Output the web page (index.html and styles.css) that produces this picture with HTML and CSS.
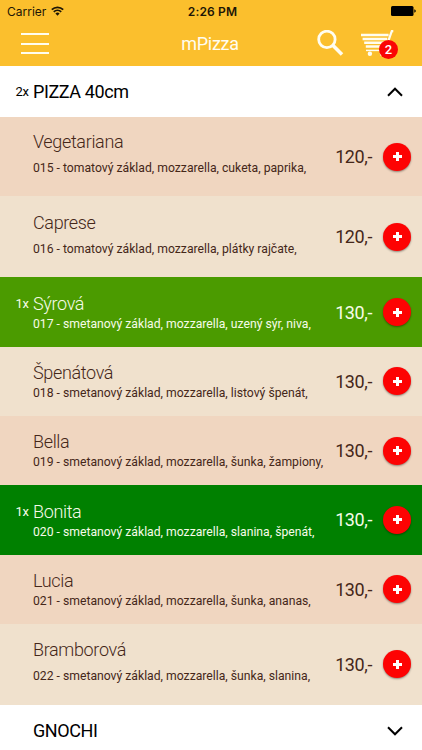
FILE: index.html
```html
<!DOCTYPE html>
<html lang="cs">

<head>
    <meta charset="utf-8">
    <meta name="viewport" content="width=device-width, initial-scale=1">
    <title>mPizza</title>
    <link rel="stylesheet" href="styles.css">
</head>

<body>
    <header class="header">
        <div class="statusbar">
            <div class="carrier">
                <span>Carrier</span>
                <svg class="wifi" width="13" height="10" viewBox="0 0 13 10" fill="none" stroke="#1d1606" stroke-width="1.8">
                    <path d="M.8 3.6a8.2 8.2 0 0 1 11.4 0M2.8 5.9a5.3 5.3 0 0 1 7.4 0" />
                    <path d="M6.5 9.7 4.4 7.6a3 3 0 0 1 4.2 0z" fill="#1d1606" stroke="none" />
                </svg>
            </div>
            <span class="time">2:26 PM</span>
            <svg class="battery" width="25" height="10" viewBox="0 0 25 10">
                <rect width="22.5" height="10" rx="1.5" />
                <path d="M23.3 3.3q1.5.4 1.5 1.7t-1.5 1.7z" />
            </svg>
        </div>
        <div class="navbar">
            <button class="menu"><span></span><span></span><span></span></button>
            <h1 class="brand">mPizza</h1>
            <div class="tools">
                <svg class="search" width="28" height="28" viewBox="0 0 28 28" fill="none" stroke="#fffdf0">
                    <circle cx="9.9" cy="9.4" r="8.2" stroke-width="2.8" />
                    <path d="m15.8 15.3 9.2 9.2" stroke-width="3.6" />
                </svg>
                <div class="cart">
                    <svg width="34" height="27" viewBox="0 0 34 27" fill="none" stroke="#fffdf0">
                        <path d="M0 5h27.6M1.6 8.9h24.6M3.2 12.7h22M4.8 16.5h19" stroke-width="2.5" />
                        <path d="M5 20.4h18.5" stroke-width="1.5" />
                        <path d="M32.3 1.2h-1.5L24 20.4" stroke-width="2.2" />
                        <circle cx="8.9" cy="23.8" r="2.2" fill="#fffdf0" stroke="none" />
                        <circle cx="21" cy="23.8" r="2.2" fill="#fffdf0" stroke="none" />
                    </svg>
                    <span class="badge">2</span>
                </div>
            </div>
        </div>
    </header>

    <main>
        <div class="category">
            <span class="count">2x</span>
            <h2>PIZZA 40cm</h2>
            <svg class="arrow" width="16" height="10" viewBox="0 0 16 10"><path d="m1 8.7 7-7 7 7" /></svg>
        </div>

        <ul class="list">
            <li class="item tall first">
                <span class="count"></span>
                <div class="info"><h3>Vegetariana</h3><p>015 - tomatový základ, mozzarella, cuketa, paprika,</p></div>
                <span class="price">120,-</span>
                <button class="add"></button>
            </li>
            <li class="item tall">
                <span class="count"></span>
                <div class="info"><h3>Caprese</h3><p>016 - tomatový základ, mozzarella, plátky rajčate,</p></div>
                <span class="price">120,-</span>
                <button class="add"></button>
            </li>
            <li class="item selected">
                <span class="count">1x</span>
                <div class="info"><h3>Sýrová</h3><p>017 - smetanový základ, mozzarella, uzený sýr, niva,</p></div>
                <span class="price">130,-</span>
                <button class="add"></button>
            </li>
            <li class="item">
                <span class="count"></span>
                <div class="info"><h3>Špenátová</h3><p>018 - smetanový základ, mozzarella, listový špenát,</p></div>
                <span class="price">130,-</span>
                <button class="add"></button>
            </li>
            <li class="item">
                <span class="count"></span>
                <div class="info"><h3>Bella</h3><p>019 - smetanový základ, mozzarella, šunka, žampiony,</p></div>
                <span class="price">130,-</span>
                <button class="add"></button>
            </li>
            <li class="item selected dark">
                <span class="count">1x</span>
                <div class="info"><h3>Bonita</h3><p>020 - smetanový základ, mozzarella, slanina, špenát,</p></div>
                <span class="price">130,-</span>
                <button class="add"></button>
            </li>
            <li class="item">
                <span class="count"></span>
                <div class="info"><h3>Lucia</h3><p>021 - smetanový základ, mozzarella, šunka, ananas,</p></div>
                <span class="price">130,-</span>
                <button class="add"></button>
            </li>
            <li class="item tall">
                <span class="count"></span>
                <div class="info"><h3>Bramborová</h3><p>022 - smetanový základ, mozzarella, šunka, slanina,</p></div>
                <span class="price">130,-</span>
                <button class="add"></button>
            </li>
        </ul>

        <div class="category">
            <span class="count"></span>
            <h2>GNOCHI</h2>
            <svg class="arrow" width="16" height="10" viewBox="0 0 16 10"><path d="m1 1.3 7 7 7-7" /></svg>
        </div>
    </main>
</body>

</html>
```

FILE: styles.css
```css
* {
    box-sizing: border-box;
}

body {
    margin: 0;
    height: 750px;
    overflow: hidden;
    background-color: white;
    font-family: Roboto, "Liberation Sans", sans-serif;
}

h1, h2, h3, p, ul {
    margin: 0;
    padding: 0;
    font-weight: 400;
}

button {
    border: none;
    padding: 0;
    background: none;
    cursor: pointer;
}

/* Header */
.header {
    height: 66px;
    background-color: #fbbf2d;
}

.statusbar {
    display: grid;
    grid-template-columns: 1fr auto 1fr;
    align-items: center;
    height: 22px;
    padding: 0 6px 0 7px;
    font-family: Inter, sans-serif;
    font-size: 12px;
    color: #1d1606;
}

.carrier {
    display: flex;
    align-items: center;
    gap: 5px;
}

.time {
    padding-left: 2px;
    font-weight: 600;
    letter-spacing: 0.15px;
}

.battery {
    justify-self: end;
}

.navbar {
    display: grid;
    grid-template-columns: 1fr auto 1fr;
    align-items: center;
    height: 43px;
    padding: 0 24px 0 21px;
}

.menu {
    display: flex;
    flex-direction: column;
    gap: 7.5px;
    width: 28px;
}

.menu span {
    height: 2px;
    background-color: #fffdf0;
}

.brand {
    padding-left: 1px;
    font-size: 18px;
    letter-spacing: -0.3px;
    color: #fffdf0;
}

.tools {
    display: flex;
    justify-content: flex-end;
    gap: 16px;
    height: 28px;
}

.cart {
    position: relative;
    width: 37px;
}

.badge {
    position: absolute;
    left: 18px;
    top: 10px;
    width: 19px;
    height: 19px;
    border-radius: 50%;
    background-color: #fa0505;
    color: white;
    font-size: 13px;
    font-weight: 500;
    line-height: 20px;
    text-align: center;
}

/* Category rows */
.category {
    display: flex;
    align-items: center;
    height: 51px;
    padding-right: 19px;
}

.category h2 {
    flex: 1;
    font-size: 18px;
    letter-spacing: -0.4px;
}

.count {
    width: 33px;
    padding-left: 15.5px;
    font-size: 13px;
    letter-spacing: -0.3px;
}

.arrow {
    fill: none;
    stroke: black;
    stroke-width: 2;
}

/* Items */
.item {
    display: flex;
    align-items: center;
    height: 69.3px;
    padding-right: 11px;
    background-color: #f0d6c0;
    color: #452719;
}

.item:nth-child(even) {
    background-color: #f0e1cd;
}

.item .count {
    align-self: flex-start;
    padding-top: 18.5px;
}

.info {
    flex: 1;
    align-self: flex-start;
    padding-top: 15.5px;
    white-space: nowrap;
}

.info h3 {
    font-size: 18px;
    font-weight: 300;
    line-height: 22px;
    letter-spacing: -0.35px;
}

.info p {
    font-size: 12.2px;
    line-height: 18px;
}

.tall {
    height: 81.2px;
}

.tall .info p {
    margin-top: 6px;
}

.first {
    height: 79.2px;
}

.first .info {
    padding-top: 14px;
}

.price {
    margin-right: 11px;
    font-size: 18px;
    letter-spacing: -0.4px;
}

.add {
    display: grid;
    place-items: center;
    width: 28px;
    height: 28px;
    border-radius: 50%;
    background-color: #fd0303;
    box-shadow: 0 1px 2px rgba(0, 0, 0, 0.4);
}

.add::before {
    content: "";
    width: 9px;
    height: 9px;
    background: linear-gradient(white, white) center / 9px 3px no-repeat,
        linear-gradient(white, white) center / 3px 9px no-repeat;
}

.item.selected {
    background-color: #4b9b00;
    color: #f7fbe9;
}

.item.dark {
    background-color: #008000;
}
```
